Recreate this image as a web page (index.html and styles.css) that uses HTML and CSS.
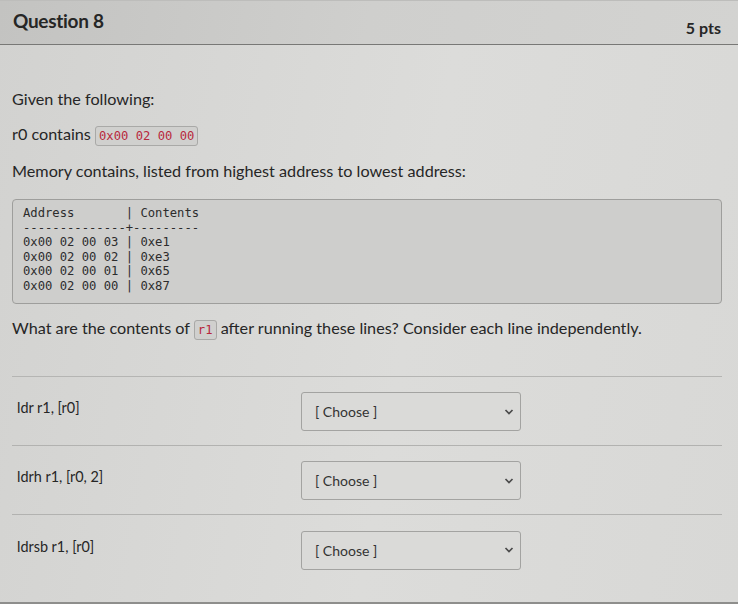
FILE: index.html
```html
<!DOCTYPE html>
<html>
<head>
<meta charset="utf-8">
<link rel="stylesheet" href="styles.css">
</head>
<body>
<div class="page">
  <header class="qhead">
    <span class="qtitle">Question 8</span>
    <span class="qpts">5 pts</span>
  </header>
  <div class="qbody">
    <p class="p1">Given the following:</p>
    <p class="p2">r0 contains <code class="ic">0x00 02 00 00</code></p>
    <p class="p3">Memory contains, listed from highest address to lowest address:</p>
    <pre class="mem">Address       | Contents
--------------+---------
0x00 02 00 03 | 0xe1
0x00 02 00 02 | 0xe3
0x00 02 00 01 | 0x65
0x00 02 00 00 | 0x87</pre>
    <p class="p4">What are the contents of <code class="ic">r1</code> after running these lines? Consider each line independently.</p>
  </div>
  <div class="answers">
    <div class="row">
      <span class="lbl">ldr r1, [r0]</span>
      <div class="sel"><span>[ Choose ]</span><svg width="10" height="8" viewBox="0 0 10 8"><path d="M1.5 2 L5 5.5 L8.5 2" fill="none" stroke="#4a4a4a" stroke-width="1.7"/></svg></div>
    </div>
    <div class="row">
      <span class="lbl">ldrh r1, [r0, 2]</span>
      <div class="sel"><span>[ Choose ]</span><svg width="10" height="8" viewBox="0 0 10 8"><path d="M1.5 2 L5 5.5 L8.5 2" fill="none" stroke="#4a4a4a" stroke-width="1.7"/></svg></div>
    </div>
    <div class="row last">
      <span class="lbl">ldrsb r1, [r0]</span>
      <div class="sel"><span>[ Choose ]</span><svg width="10" height="8" viewBox="0 0 10 8"><path d="M1.5 2 L5 5.5 L8.5 2" fill="none" stroke="#4a4a4a" stroke-width="1.7"/></svg></div>
    </div>
  </div>
</div>
</body>
</html>
```
FILE: styles.css
```css
html, body {
  margin: 0;
  padding: 0;
  background: #d8d8d6;
}
body {
  font-family: Lato, "Open Sans", sans-serif;
  color: #262626;
  width: 738px;
  height: 604px;
  overflow: hidden;
  background: linear-gradient(100deg, #d2d2d0 0%, #dcdcda 55%, #d8d8d6 100%);
}
.page {
  padding: 0 16px 0 12px;
  height: 604px;
  box-sizing: border-box;
  border-bottom: 2px solid #8e8e8c;
}
.qhead {
  display: flex;
  justify-content: space-between;
  align-items: center;
  height: 45px;
  margin: 0 -16px 0 -12px;
  padding: 0 17px 0 13px;
  background: linear-gradient(100deg, #c3c3c1 0%, #cfcfcd 50%, #d3d3d1 100%);
  border-top: 1px solid #bdbdbb;
  border-bottom: 1px solid #787876;
  box-sizing: border-box;
}
.qtitle {
  font-weight: 700;
  font-size: 19px;
  letter-spacing: -0.3px;
  padding-bottom: 4px;
}
.qpts {
  font-weight: 700;
  font-size: 16px;
  padding-top: 10px;
}
.qbody {
  padding-top: 45px;
}
p {
  margin: 0;
  font-size: 16.2px;
}
.p1 { height: 35px; line-height: 18px; }
.p2 { height: 37px; line-height: 18px; }
.p3 { height: 37px; line-height: 18px; }
.ic {
  font-family: "DejaVu Sans Mono", monospace;
  font-size: 12.2px;
  color: #b8283c;
  background: #d0d0ce;
  border: 1px solid #a9a9a7;
  border-radius: 3px;
  padding: 2px 3px;
}
.mem {
  margin: 0;
  height: 105px;
  box-sizing: border-box;
  padding: 6px 10px;
  border: 1px solid #9e9e9c;
  border-radius: 4px;
  background: #cececc;
  font-family: "DejaVu Sans Mono", monospace;
  font-size: 12.2px;
  line-height: 14.6px;
  color: #2c2c2c;
  width: 710px;
}
.p4 {
  margin-top: 15px;
  line-height: 18px;
  height: 57px;
}
.answers {
  border-top: 1px solid #b5b5b3;
  width: 710px;
}
.row {
  display: flex;
  align-items: center;
  height: 69px;
  border-bottom: 1px solid #b2b2b0;
  padding-left: 5px;
  padding-top: 1px;
  box-sizing: border-box;
}
.row.last { border-bottom: none; }
.lbl {
  font-size: 14.4px;
  width: 284px;
  padding-bottom: 8px;
}
.sel {
  display: flex;
  align-items: center;
  justify-content: space-between;
  width: 220px;
  height: 39px;
  box-sizing: border-box;
  border: 1px solid #a3a3a1;
  border-radius: 3px;
  background: #dadad8;
  padding: 0 6px 0 13px;
  font-size: 14px;
  color: #333;
}
```
